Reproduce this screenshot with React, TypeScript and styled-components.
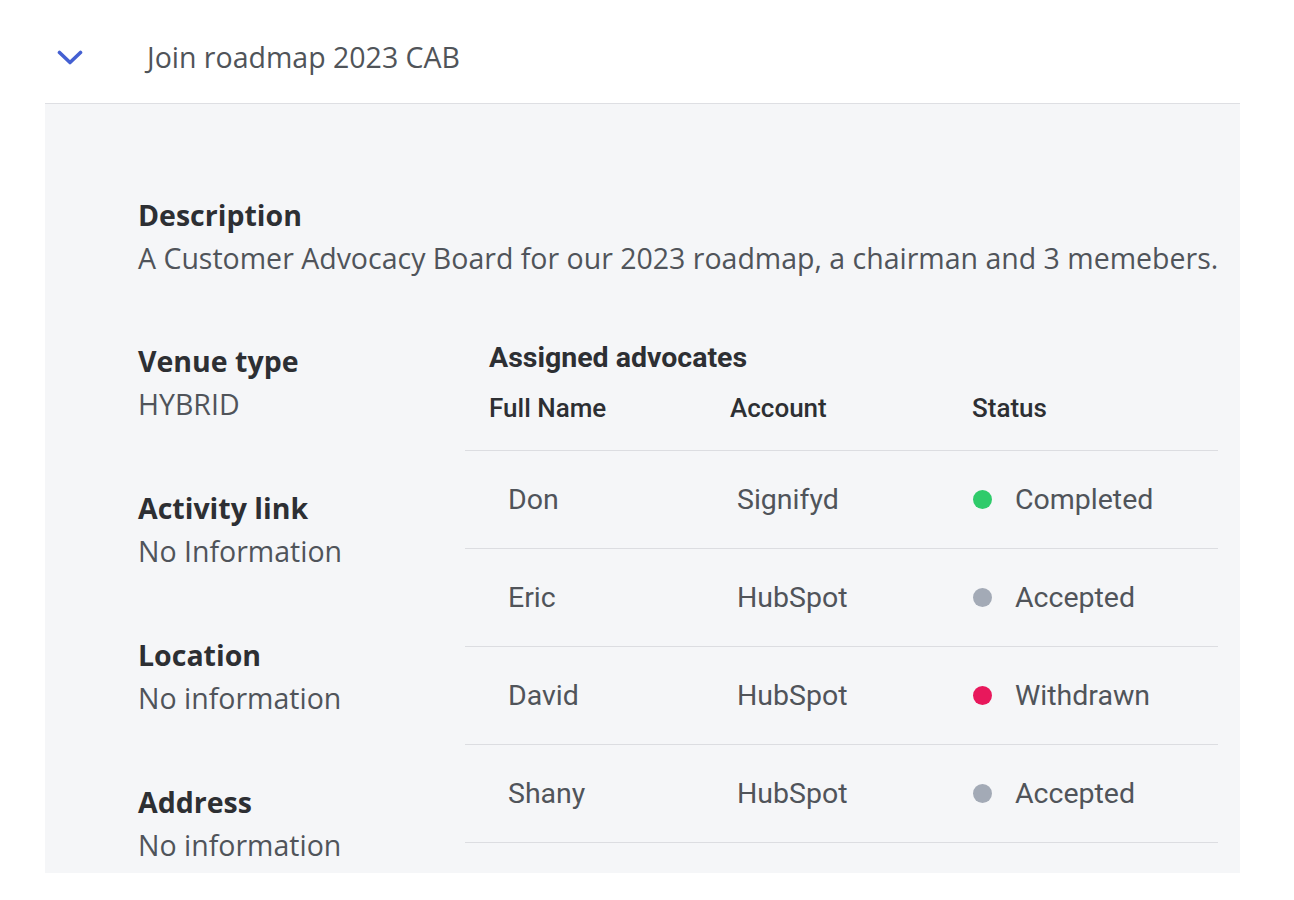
import React from 'react';
import styled, { createGlobalStyle } from 'styled-components';

const Global = createGlobalStyle`
  body { margin: 0; background: #fff; font-family: "Open Sans", "Liberation Sans", sans-serif; }
`;

const Page = styled.div` padding: 0 54px 0 45px; `;
const Header = styled.div` height: 103px; display: flex; align-items: center; `;
const Chevron = styled.span`
  width: 102px; padding-left: 12px; margin-top: 12px; display: flex; align-items: center; box-sizing: border-box;
`;
const Title = styled.div` font-size: 28.5px; color: #505459; margin-top: 10px; `;

const Panel = styled.div`
  background: #f5f6f8; border-top: 1px solid #dedfe3;
  padding: 90px 22px 6px 93px;
`;
const Label = styled.div` font-size: 28.5px; font-weight: 700; color: #2d2f33; line-height: 43px; `;
const Value = styled.div` font-size: 28.5px; color: #50545a; line-height: 43px; white-space: nowrap; `;

const Body = styled.div` display: grid; grid-template-columns: 327px 1fr; margin-top: 60px; `;
const Fields = styled.div` display: flex; flex-direction: column; gap: 61px; `;

const Advocates = styled.div` font-family: Roboto, "Liberation Sans", sans-serif; `;
const Heading = styled.div` font-size: 28.5px; font-weight: 700; color: #2d2f33; line-height: 36px; padding-left: 24px; `;
const Grid = styled.div` display: grid; grid-template-columns: 241px 242px 1fr; `;
const Th = styled.div`
  font-size: 26px; font-weight: 500; color: #2d2f33; line-height: 30px;
  padding: 17px 0 27px 24px; border-bottom: 1px solid #dcdde1;
`;
const Td = styled.div<{ $pad: number }>`
  height: 97px; display: flex; align-items: center; padding-left: ${p => p.$pad}px;
  font-size: 28.5px; color: #50545a; border-bottom: 1px solid #dcdde1;
`;
const Dot = styled.span<{ $color: string }>`
  width: 19px; height: 19px; border-radius: 50%; background: ${p => p.$color}; margin-right: 23px; flex: none;
`;

const statusColors: Record<string, string> = { Completed: '#2fcb6b', Accepted: '#a3aab6', Withdrawn: '#e8185c' };

const rows = [
  { name: 'Don', account: 'Signifyd', status: 'Completed' },
  { name: 'Eric', account: 'HubSpot', status: 'Accepted' },
  { name: 'David', account: 'HubSpot', status: 'Withdrawn' },
  { name: 'Shany', account: 'HubSpot', status: 'Accepted' },
];

const fields = [
  { label: 'Venue type', value: 'HYBRID' },
  { label: 'Activity link', value: 'No Information' },
  { label: 'Location', value: 'No information' },
  { label: 'Address', value: 'No information' },
];

export default function App() {
  return (
    <Page>
      <Global />
      <Header>
        <Chevron>
          <svg width="26" height="16" viewBox="0 0 26 16" fill="none">
            <polyline points="2.5,2.5 13,12.5 23.5,2.5" stroke="#4460d2" strokeWidth="3.6" strokeLinecap="round" strokeLinejoin="round" />
          </svg>
        </Chevron>
        <Title>Join roadmap 2023 CAB</Title>
      </Header>
      <Panel>
        <Label>Description</Label>
        <Value>A Customer Advocacy Board for our 2023 roadmap, a chairman and 3 memebers.</Value>
        <Body>
          <Fields>
            {fields.map(f => (
              <div key={f.label}>
                <Label>{f.label}</Label>
                <Value>{f.value}</Value>
              </div>
            ))}
          </Fields>
          <Advocates>
            <Heading>Assigned advocates</Heading>
            <Grid>
              <Th>Full Name</Th>
              <Th>Account</Th>
              <Th>Status</Th>
              {rows.map(r => (
                <React.Fragment key={r.name}>
                  <Td $pad={43}>{r.name}</Td>
                  <Td $pad={31}>{r.account}</Td>
                  <Td $pad={25}><Dot $color={statusColors[r.status]} />{r.status}</Td>
                </React.Fragment>
              ))}
            </Grid>
          </Advocates>
        </Body>
      </Panel>
    </Page>
  );
}
